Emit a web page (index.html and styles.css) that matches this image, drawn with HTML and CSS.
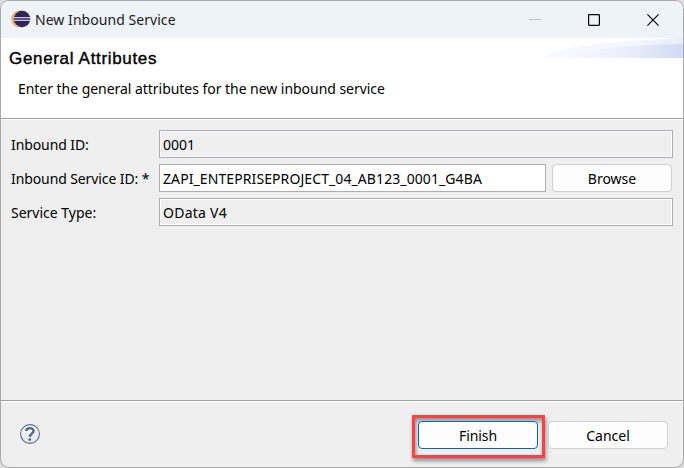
FILE: index.html
```html
<!DOCTYPE html>
<html lang="en">
<head>
<meta charset="utf-8">
<title>New Inbound Service</title>
<link rel="stylesheet" href="styles.css">
</head>
<body>
<main class="window">
  <header class="titlebar">
    <svg class="logo" width="20" height="20" viewBox="0 0 20 20">
      <circle cx="9.2" cy="9" r="8.8" fill="#f0a350"/>
      <circle cx="11.2" cy="9" r="8.8" fill="#eef2f7"/>
      <circle cx="11" cy="9" r="8.3" fill="#302657"/>
      <path d="M2.5 7.5h16.8M2.5 10.5h16.8" stroke="#c9c8df" stroke-width="1.1"/>
      <path d="M2.5 9h16.8" stroke="#8a83ad"/>
    </svg>
    <span class="title">New Inbound Service</span>
    <div class="controls">
      <svg width="12" height="12" viewBox="0 0 12 12"><path d="M0 5.5h12" stroke="#bfc3c7"/></svg>
      <svg width="12" height="12" viewBox="0 0 12 12"><rect x=".6" y=".6" width="10.8" height="10.8" rx=".8" fill="none" stroke="#000" stroke-width="1.2"/></svg>
      <svg width="12" height="12" viewBox="0 0 12 12"><path d="M.4.4l11.2 11.2M11.6.4L.4 11.6" stroke="#000" stroke-width="1.1"/></svg>
    </div>
  </header>
  <section class="banner">
    <div class="banner-text">
      <h1>General Attributes</h1>
      <p>Enter the general attributes for the new inbound service</p>
    </div>
    <svg class="swoosh" width="141" height="20" viewBox="0 0 141 20">
      <defs>
        <linearGradient id="outer"><stop stop-color="#f7f9fe"/><stop offset=".7" stop-color="#f3f6fd"/><stop offset="1" stop-color="#e5ecfa"/></linearGradient>
        <linearGradient id="inner"><stop stop-color="#f7f9fe"/><stop offset=".5" stop-color="#ebeffa"/><stop offset="1" stop-color="#d0dbf5"/></linearGradient>
      </defs>
      <path d="M0 20C14 8 70 3 141 0V20Z" fill="url(#outer)"/>
      <path d="M22 20C50 10 90 7 141 6V20Z" fill="url(#inner)"/>
    </svg>
  </section>
  <form class="form">
    <span class="label tight">Inbound ID:</span>
    <div class="field readonly wide"><span>0001</span></div>
    <span class="label tight">Inbound Service ID: *</span>
    <div class="field"><span class="service-id">ZAPI_ENTEPRISEPROJECT_04_AB123_0001_G4BA</span></div>
    <button type="button" class="btn"><span>Browse</span></button>
    <span class="label">Service Type:</span>
    <div class="field readonly wide"><span class="service-type">OData V4</span></div>
  </form>
  <footer class="footer">
    <svg class="help" width="20" height="20" viewBox="0 0 20 20">
      <defs><linearGradient id="glass" x2="0" y2="1"><stop stop-color="#fff"/><stop offset="1" stop-color="#e3e4e8"/></linearGradient></defs>
      <circle cx="10" cy="10" r="9.4" fill="url(#glass)" stroke="#566c90" stroke-width="1.1"/>
      <path d="M6.2 7C6.3 3.2 13.6 3.2 13.6 7C13.6 9.4 10 9.6 10 12.8" fill="none" stroke="#4d648b" stroke-width="2.4"/>
      <circle cx="9.8" cy="15.6" r="1.4" fill="#4d648b"/>
    </svg>
    <div class="highlight"><button type="button" class="btn primary"><span class="tight">Finish</span></button></div>
    <button type="button" class="btn"><span>Cancel</span></button>
  </footer>
</main>
</body>
</html>
```
FILE: styles.css
```css
* { box-sizing: border-box; }
body {
  margin: 0;
  background: #dcdcdc;
  font: 14px/20px "Noto Sans", "Open Sans", sans-serif;
  color: #000;
}
.window {
  width: 684px;
  height: 468px;
  display: flex;
  flex-direction: column;
  background: #efefef;
  border: 1px solid #a9a9a9;
  border-radius: 9px;
  overflow: hidden;
}
.titlebar {
  height: 37px;
  flex: none;
  display: flex;
  align-items: center;
  padding: 0 24px 0 10px;
  background: #eef3f8;
}
.logo { margin-right: 4px; }
.title { letter-spacing: .05px; color: #1b1b1b; }
.controls { margin-left: auto; display: flex; gap: 47px; }
.banner {
  height: 82px;
  flex: none;
  display: flex;
  justify-content: space-between;
  background: #fff;
  box-shadow: inset 0 -1px #fff, inset 0 -2px #a0a0a0;
}
.swoosh { flex: none; }
.banner-text { padding: 11px 0 0 8px; white-space: nowrap; }
h1 {
  margin: 0;
  font: 17px/20px "Liberation Sans", Arial, sans-serif;
  letter-spacing: .67px;
  -webkit-text-stroke: .4px #000;
}
p { margin: 10px 0 0 9px; letter-spacing: -.04px; }
.form {
  flex: 1;
  display: grid;
  grid-template-columns: 148px 387px 120px;
  grid-template-rows: 28px 28px 28px;
  row-gap: 6px;
  padding: 10px 0 0 10px;
  align-items: center;
  white-space: nowrap;
}
.label { padding-top: 2px; }
.tight { letter-spacing: -.1px; }
.field {
  height: 28px;
  border: 1px solid #abadb3;
  background: #fff;
  padding: 4px 3px 2px;
}
.service-id { letter-spacing: .09px; }
.service-type { letter-spacing: .25px; }
.wide { grid-column: 2 / 4; width: 514px; }
.readonly { background: #efefef; box-shadow: inset 0 0 0 1px #fff; }
.btn {
  width: 120px;
  height: 28px;
  padding: 2px 0 0;
  border: 1px solid #d0d0d0;
  border-radius: 4px;
  background: #fdfdfd;
  font: inherit;
  color: inherit;
}
.form .btn { margin-left: 6px; }
.footer {
  height: 67px;
  flex: none;
  display: flex;
  align-items: flex-start;
  padding: 14px 15px 0 19px;
  border-top: 1px solid #a0a0a0;
  box-shadow: inset 0 1px #fff;
}
.help { margin-top: 9px; }
.highlight {
  width: 133px;
  height: 43px;
  margin: 0 3px 0 auto;
  padding: 3px;
  border: 3px solid #fb4141;
  box-shadow: 1px 3px 4px rgba(0,0,0,.4), inset 1px 3px 4px rgba(0,0,0,.4);
}
.footer > .btn { margin-top: 6px; }
.btn.primary { display: block; border-color: #0067c0; }
```
